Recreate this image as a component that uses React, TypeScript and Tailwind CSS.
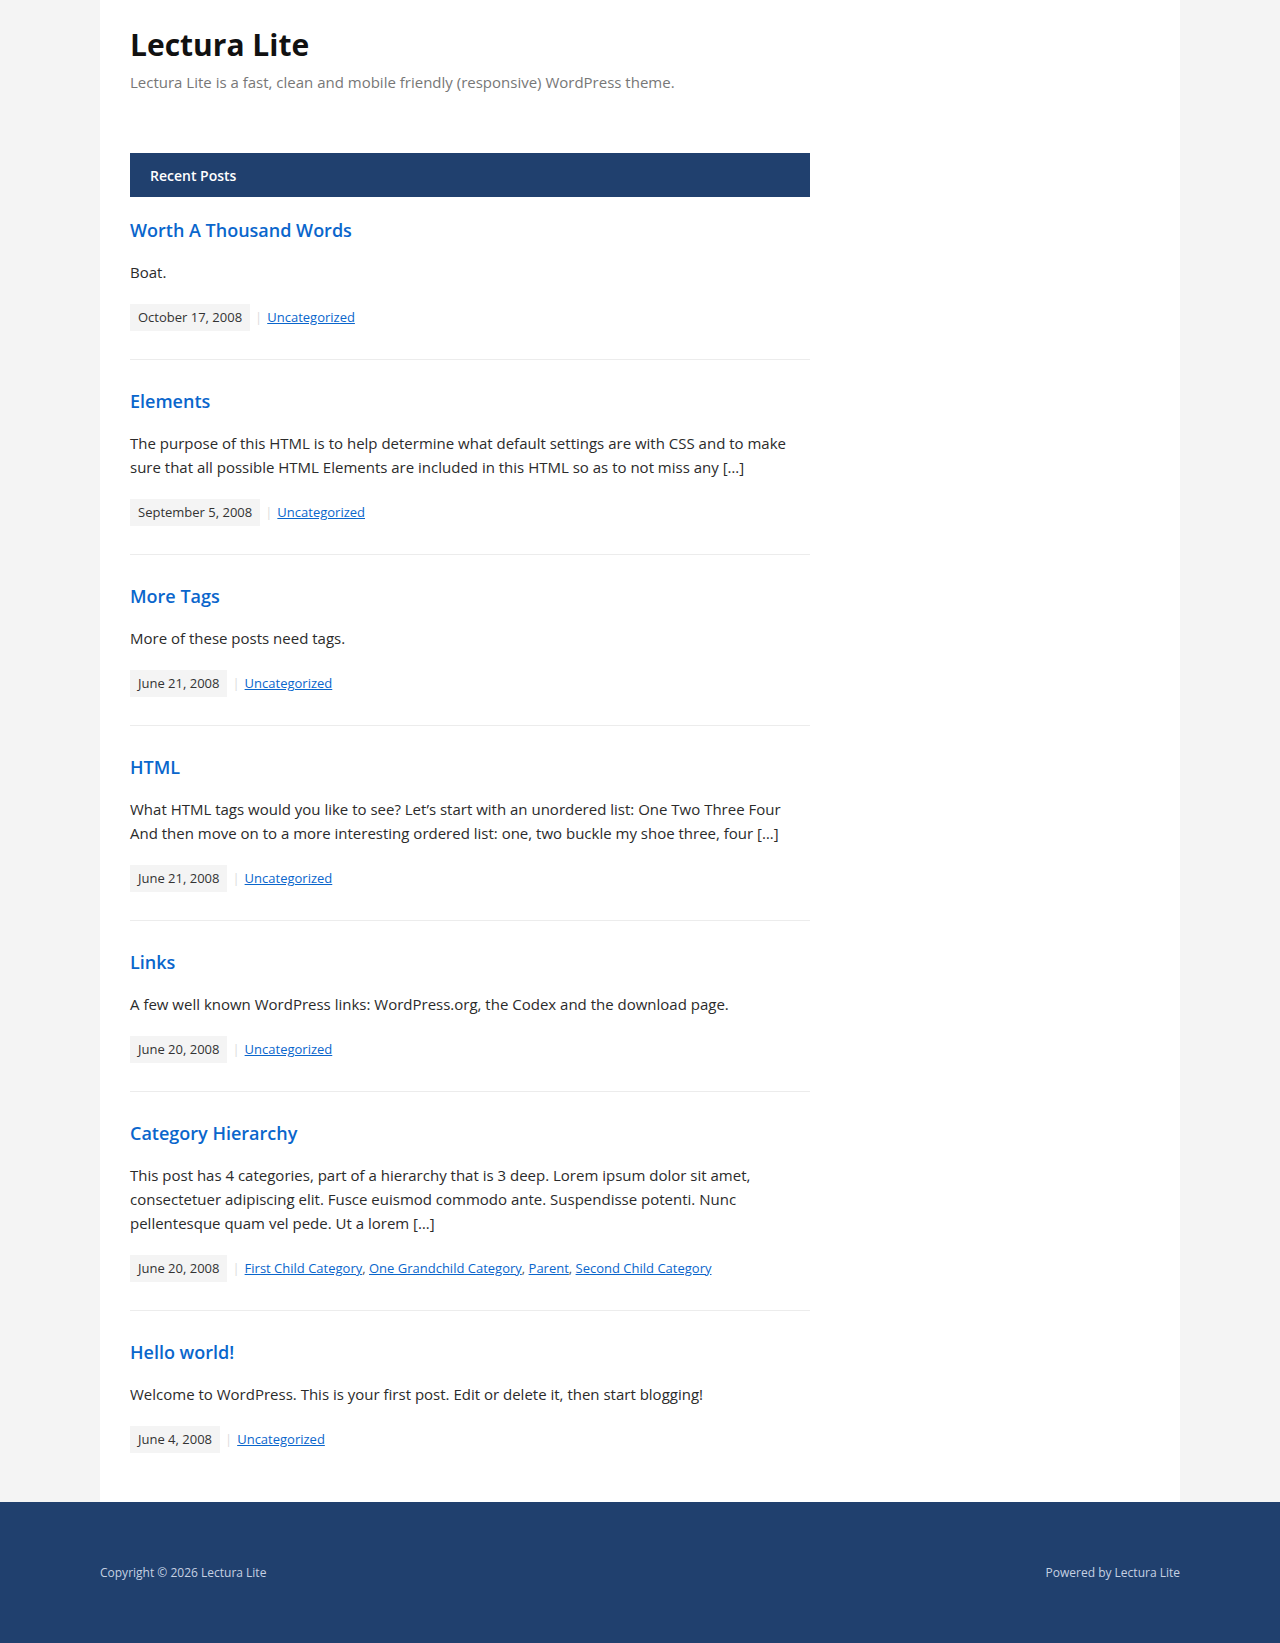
import React from "react";

type Post = {
  title: string;
  excerpt: string;
  date: string;
  cats: string[];
};

const posts: Post[] = [
  {
    title: "Worth A Thousand Words",
    excerpt: "Boat.",
    date: "October 17, 2008",
    cats: ["Uncategorized"],
  },
  {
    title: "Elements",
    excerpt:
      "The purpose of this HTML is to help determine what default settings are with CSS and to make sure that all possible HTML Elements are included in this HTML so as to not miss any […]",
    date: "September 5, 2008",
    cats: ["Uncategorized"],
  },
  {
    title: "More Tags",
    excerpt: "More of these posts need tags.",
    date: "June 21, 2008",
    cats: ["Uncategorized"],
  },
  {
    title: "HTML",
    excerpt:
      "What HTML tags would you like to see? Let’s start with an unordered list: One Two Three Four And then move on to a more interesting ordered list: one, two buckle my shoe three, four […]",
    date: "June 21, 2008",
    cats: ["Uncategorized"],
  },
  {
    title: "Links",
    excerpt: "A few well known WordPress links: WordPress.org, the Codex and the download page.",
    date: "June 20, 2008",
    cats: ["Uncategorized"],
  },
  {
    title: "Category Hierarchy",
    excerpt:
      "This post has 4 categories, part of a hierarchy that is 3 deep. Lorem ipsum dolor sit amet, consectetuer adipiscing elit. Fusce euismod commodo ante. Suspendisse potenti. Nunc pellentesque quam vel pede. Ut a lorem […]",
    date: "June 20, 2008",
    cats: ["First Child Category", "One Grandchild Category", "Parent", "Second Child Category"],
  },
  {
    title: "Hello world!",
    excerpt: "Welcome to WordPress. This is your first post. Edit or delete it, then start blogging!",
    date: "June 4, 2008",
    cats: ["Uncategorized"],
  },
];

function PostItem({ post, last }: { post: Post; last: boolean }) {
  return (
    <article className={last ? "pt-[19px]" : "pt-[19px] pb-[28px] border-b border-[#ececec]"}>
      <h2 className="text-[18px] leading-[28px] font-semibold text-[#0a66cc]">
        <a href="#">{post.title}</a>
      </h2>
      <p className="mt-[16px] text-[15px] leading-[24px] text-[#2b2b2b]">{post.excerpt}</p>
      <div className="mt-[20px] flex items-center text-[13px] leading-[19px]">
        <span className="bg-[#f4f4f4] px-2 py-1 text-[#333]">{post.date}</span>
        <span className="mx-[5px] text-[#dcdcdc]">|</span>
        <span className="text-[#555]">
          {post.cats.map((c, i) => (
            <React.Fragment key={c}>
              {i > 0 && ", "}
              <a href="#" className="text-[#0a66cc] underline">
                {c}
              </a>
            </React.Fragment>
          ))}
        </span>
      </div>
    </article>
  );
}

export default function App() {
  return (
    <div className="min-h-[1643px] flex flex-col bg-[#f4f4f4] font-['Open_Sans',sans-serif]">
      <div className="w-[1080px] mx-auto bg-white px-[30px] pt-[27px] pb-[22px] flex-1">
        <header>
          <h1 className="text-[30px] leading-[36px] font-bold text-[#111]">Lectura Lite</h1>
          <p className="mt-[7px] text-[15px] leading-[24px] text-[#777]">
            Lectura Lite is a fast, clean and mobile friendly (responsive) WordPress theme.
          </p>
        </header>

        <main className="w-[680px] mt-[59px]">
          <div className="h-[44px] bg-[#20406e] px-5 flex items-center">
            <h3 className="text-[14px] font-semibold text-white">Recent Posts</h3>
          </div>
          <div className="flex flex-col gap-[8px]">
            {posts.map((p, i) => (
              <PostItem key={p.title} post={p} last={i === posts.length - 1} />
            ))}
          </div>
        </main>
      </div>

      <footer className="bg-[#20406e] py-[60px]">
        <div className="w-[1080px] mx-auto flex justify-between text-[12px] leading-[21px] text-[#c6d1e2]">
          <span>Copyright © 2026 Lectura Lite</span>
          <span>Powered by Lectura Lite</span>
        </div>
      </footer>
    </div>
  );
}
